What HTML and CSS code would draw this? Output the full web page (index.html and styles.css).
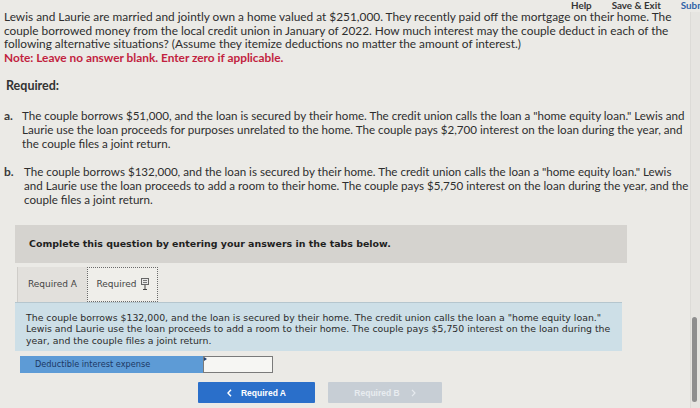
FILE: index.html
```html
<!DOCTYPE html>
<html lang="en">
<head>
<meta charset="utf-8">
<title>Home equity loan interest</title>
<link rel="stylesheet" href="styles.css">
</head>
<body>
<div class="page">
  <div class="topbar">
    <span class="top-link">Help</span>
    <span class="top-link">Save &amp; Exit</span>
    <span class="top-link submit">Submit</span>
  </div>

  <p class="intro">Lewis and Laurie are married and jointly own a home valued at $251,000. They recently paid off the mortgage on their home. The<br>couple borrowed money from the local credit union in January of 2022. How much interest may the couple deduct in each of the<br>following alternative situations? (Assume they itemize deductions no matter the amount of interest.)<br><span class="note">Note: Leave no answer blank. Enter zero if applicable.</span></p>

  <h3 class="required">Required:</h3>

  <div class="parts">
    <div class="part">
      <span class="part-label">a.</span>
      <p class="part-text">The couple borrows $51,000, and the loan is secured by their home. The credit union calls the loan a "home equity loan." Lewis and<br>Laurie use the loan proceeds for purposes unrelated to the home. The couple pays $2,700 interest on the loan during the year, and<br>the couple files a joint return.</p>
    </div>
    <div class="part part-b">
      <span class="part-label">b.</span>
      <p class="part-text">The couple borrows $132,000, and the loan is secured by their home. The credit union calls the loan a "home equity loan." Lewis<br>and Laurie use the loan proceeds to add a room to their home. The couple pays $5,750 interest on the loan during the year, and the<br>couple files a joint return.</p>
    </div>
  </div>

  <div class="widget">
    <div class="instructions">Complete this question by entering your answers in the tabs below.</div>
    <div class="tabs">
      <div class="tab">Required A</div>
      <div class="tab tab-active">Required
        <svg class="cursor" width="8" height="12" viewBox="0 0 8 12">
          <rect x="0.5" y="0.5" width="7" height="6" fill="#e8e8e8" stroke="#666" stroke-width="1"/>
          <line x1="2" y1="2.5" x2="6" y2="2.5" stroke="#777" stroke-width="1"/>
          <line x1="2" y1="4.5" x2="6" y2="4.5" stroke="#777" stroke-width="1"/>
          <line x1="4" y1="7" x2="4" y2="11.5" stroke="#444" stroke-width="1"/>
          <line x1="2" y1="11.5" x2="6" y2="11.5" stroke="#444" stroke-width="1"/>
        </svg>
      </div>
    </div>
    <div class="panel">The couple borrows $132,000, and the loan is secured by their home. The credit union calls the loan a "home equity loan."<br>Lewis and Laurie use the loan proceeds to add a room to their home. The couple pays $5,750 interest on the loan during the<br>year, and the couple files a joint return.</div>
    <div class="answer-row">
      <div class="answer-label">Deductible interest expense</div>
      <div class="answer-input"></div>
    </div>
    <div class="nav">
      <div class="btn btn-prev">
        <svg width="5" height="8" viewBox="0 0 5 8"><polyline points="4,0.8 1,4 4,7.2" fill="none" stroke="#fff" stroke-width="1.4"/></svg>
        <span>Required A</span>
      </div>
      <div class="btn btn-next">
        <span>Required B</span>
        <svg width="5" height="8" viewBox="0 0 5 8"><polyline points="1,0.8 4,4 1,7.2" fill="none" stroke="#e6eaee" stroke-width="1.2"/></svg>
      </div>
    </div>
  </div>

  <div class="scroll-track"></div>
  <div class="scroll-thumb"></div>
</div>
</body>
</html>
```

FILE: styles.css
```css
html, body {
  margin: 0;
  padding: 0;
  background: #ebeae6;
}

.page {
  position: relative;
  width: 700px;
  height: 408px;
  overflow: hidden;
  padding-left: 4px;
  box-sizing: border-box;
  font-family: Lato, "Liberation Sans", sans-serif;
  color: #2e2e2e;
}

.topbar {
  position: relative;
  z-index: 2;
  height: 10px;
  display: flex;
  align-items: flex-start;
  gap: 20px;
  padding-left: 567px;
  white-space: nowrap;
}

.top-link {
  font-size: 9.8px;
  line-height: 11.5px;
  font-weight: 700;
  color: #353535;
}

.top-link.submit {
  color: #2f62a6;
}

.intro {
  margin: 0;
  font-size: 11.85px;
  line-height: 13.6px;
  white-space: nowrap;
}

.note {
  font-weight: 700;
  color: #c21f40;
}

.required {
  margin: 13.5px 0 0 2px;
  font-size: 12.5px;
  line-height: 15px;
  font-weight: 700;
  color: #333;
}

.parts {
  margin-top: 16px;
  display: flex;
  flex-direction: column;
  gap: 14px;
}

.part {
  display: flex;
}

.part-label {
  width: 18px;
  flex: none;
  font-size: 12px;
  line-height: 14px;
  font-weight: 700;
  color: #3a3a3a;
}

.part-b .part-text {
  padding-left: 2px;
}

.part-text {
  margin: 0;
  font-size: 11.6px;
  line-height: 14px;
  white-space: nowrap;
}

.widget {
  margin: 18px 0 0 11px;
  width: 612px;
  font-family: "DejaVu Sans", Verdana, sans-serif;
}

.instructions {
  height: 38px;
  line-height: 38px;
  padding-left: 14px;
  background: #d5d3cf;
  font-size: 9.45px;
  font-weight: 700;
  color: #1f1f1f;
}

.tabs {
  margin-top: 4px;
  padding-left: 2px;
  height: 35px;
  display: flex;
}

.tab {
  width: 70px;
  display: flex;
  align-items: center;
  justify-content: center;
  gap: 4px;
  background: #e2e0dc;
  border-left: 1px solid #cfcdc9;
  font-size: 9px;
  color: #444;
  box-sizing: border-box;
}

.tab-active {
  width: 71px;
  background: #efeeea;
  border: 1px dotted #6a6a6a;
}

.cursor {
  display: block;
}

.panel {
  width: 607px;
  box-sizing: border-box;
  padding: 9px 6px 5px 11px;
  background: #cddfe7;
  border-top: 1px solid #b5c6ce;
  font-size: 9.35px;
  line-height: 11.5px;
  color: #2b2b2b;
  white-space: nowrap;
}

.answer-row {
  margin: 5px 0 0 5px;
  height: 17px;
  display: flex;
}

.answer-label {
  width: 183px;
  background: #5d9bd6;
  padding-left: 15px;
  box-sizing: border-box;
  font-size: 8.2px;
  line-height: 17px;
  color: #1c3864;
}

.answer-input {
  position: relative;
  width: 70px;
  background: #f6f6f3;
  border: 1px solid #7a7a7a;
  box-sizing: border-box;
}

.answer-input::before {
  content: "";
  position: absolute;
  left: 0;
  top: 0;
  border-left: 3px solid #22406e;
  border-top: 2px solid transparent;
  border-bottom: 2px solid transparent;
}

.nav {
  margin: 9px 0 0 183px;
  display: flex;
  gap: 13px;
}

.btn {
  height: 21px;
  display: flex;
  align-items: center;
  justify-content: center;
  font-family: "Liberation Sans", Arial, sans-serif;
  font-size: 8.5px;
  font-weight: 700;
  border-radius: 1px;
}

.btn svg {
  display: block;
}

.btn-prev {
  width: 117px;
  gap: 9px;
  background: #2a6fca;
  color: #ffffff;
}

.btn-next {
  width: 114px;
  gap: 11px;
  background: #c7ced5;
  color: #e8ecf0;
}

.scroll-track {
  position: absolute;
  right: 0;
  top: 12px;
  width: 9px;
  height: 396px;
  background: #e6e5e1;
  border-left: 1px solid #dcdbd7;
}

.scroll-thumb {
  position: absolute;
  right: 3px;
  top: 317px;
  width: 5px;
  height: 85px;
  border-radius: 3px;
  background: #8e8e8e;
}
```
